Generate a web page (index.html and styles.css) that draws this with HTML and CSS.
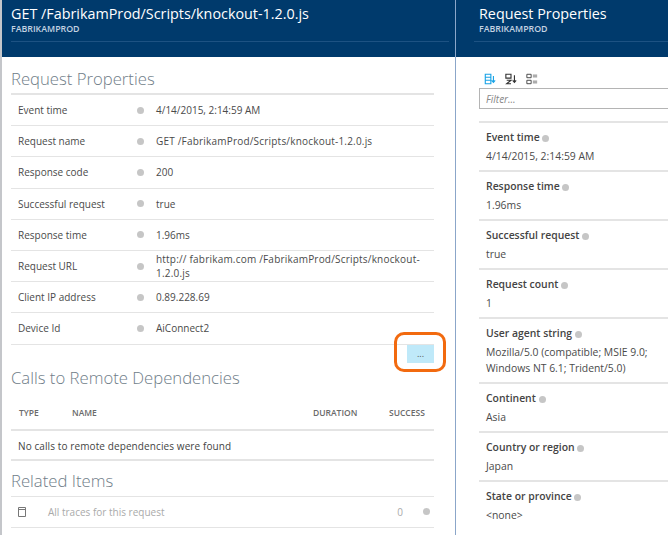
FILE: index.html
```html
<!DOCTYPE html>
<html lang="en">
<head>
  <meta charset="UTF-8">
  <title>Request Properties</title>
  <link rel="stylesheet" href="styles.css">
</head>
<body>
  <div class="blades">
    <section class="blade blade-main">
      <header class="blade-head">
        <h1>GET /FabrikamProd/Scripts/knockout-1.2.0.js</h1>
        <div class="sub">FABRIKAMPROD</div>
        <div class="head-rule"></div>
      </header>
      <div class="blade-body">
        <h2>Request Properties</h2>
        <div class="props">
          <div class="prop"><span class="key">Event time</span><span class="dot"></span><span class="val">4/14/2015, 2:14:59 AM</span></div>
          <div class="prop"><span class="key">Request name</span><span class="dot"></span><span class="val long">GET /FabrikamProd/Scripts/knockout-1.2.0.js</span></div>
          <div class="prop"><span class="key">Response code</span><span class="dot"></span><span class="val">200</span></div>
          <div class="prop"><span class="key">Successful request</span><span class="dot"></span><span class="val">true</span></div>
          <div class="prop"><span class="key">Response time</span><span class="dot"></span><span class="val">1.96ms</span></div>
          <div class="prop"><span class="key">Request URL</span><span class="dot"></span><span class="val long">http:// fabrikam.com /FabrikamProd/Scripts/knockout-1.2.0.js</span></div>
          <div class="prop"><span class="key">Client IP address</span><span class="dot"></span><span class="val">0.89.228.69</span></div>
          <div class="prop"><span class="key">Device Id</span><span class="dot"></span><span class="val">AiConnect2</span></div>
        </div>
        <div class="more-row">
          <button class="more">...</button>
          <span class="callout"></span>
        </div>
        <h2 class="h-calls">Calls to Remote Dependencies</h2>
        <div class="dep-head">
          <span class="c-type">TYPE</span>
          <span class="c-name">NAME</span>
          <span class="c-dur">DURATION</span>
          <span class="c-ok">SUCCESS</span>
        </div>
        <div class="dep-empty">No calls to remote dependencies were found</div>
        <h2 class="h-related">Related Items</h2>
        <div class="related">
          <svg class="doc" width="8" height="10" viewBox="0 0 8 10"><path d="M.5.500h7v9h-7zM.5 2.500h7" fill="none" stroke="#777" stroke-width="1"/></svg>
          <span class="rel-name">All traces for this request</span>
          <span class="rel-count">0</span>
          <span class="dot"></span>
        </div>
      </div>
    </section>
    <section class="blade blade-side">
      <header class="blade-head">
        <h1>Request Properties</h1>
        <div class="sub">FABRIKAMPROD</div>
        <div class="head-rule"></div>
      </header>
      <div class="blade-body">
        <div class="tools">
          <svg width="12" height="12" viewBox="0 0 14 13"><path d="M1.500 1h6.500v11H1.500zM1.500 4.500h6.500M1.500 8h6.500M11 3v7M9 8l2 2.500L13 8" fill="none" stroke="#19a3e6" stroke-width="1.300"/></svg>
          <svg width="12" height="12" viewBox="0 0 14 13"><path d="M1 1h6v4.500H1zM2 8h5L2 12h5M11 2v8M9 8l2 2.500L13 8" fill="none" stroke="#333" stroke-width="1.300"/></svg>
          <svg width="12" height="12" viewBox="0 0 14 13"><path d="M1 1h5v4H1zM1 8h5v4H1z" fill="none" stroke="#444" stroke-width="1.100"/><path d="M8 2h5M8 4h5M8 9h5M8 11h5" stroke="#777" stroke-width="1.100"/></svg>
        </div>
        <input class="filter" type="text" placeholder="Filter...">
        <div class="item"><div class="name">Event time <span class="dot"></span></div><div class="text">4/14/2015, 2:14:59 AM</div></div>
        <div class="item"><div class="name">Response time <span class="dot"></span></div><div class="text">1.96ms</div></div>
        <div class="item"><div class="name">Successful request <span class="dot"></span></div><div class="text">true</div></div>
        <div class="item"><div class="name">Request count <span class="dot"></span></div><div class="text">1</div></div>
        <div class="item"><div class="name">User agent string <span class="dot"></span></div><div class="text">Mozilla/5.0 (compatible; MSIE 9.0; Windows NT 6.1; Trident/5.0)</div></div>
        <div class="item"><div class="name">Continent <span class="dot"></span></div><div class="text">Asia</div></div>
        <div class="item"><div class="name">Country or region <span class="dot"></span></div><div class="text">Japan</div></div>
        <div class="item"><div class="name">State or province <span class="dot"></span></div><div class="text">&lt;none&gt;</div></div>
      </div>
    </section>
  </div>
</body>
</html>
```

FILE: styles.css
```css
html, body {
  margin: 0;
  height: 100%;
  overflow: hidden;
}

body {
  font-family: "Open Sans", "Noto Sans", sans-serif;
  font-size: 10px;
  color: #444;
  background-color: #fff;
}

.blades {
  display: flex;
  height: 535px;
}

.blade {
  box-sizing: border-box;
  height: 535px;
  overflow: hidden;
}

.blade-main {
  width: 456px;
  flex: none;
  border-left: 2px solid #c4c6ca;
  border-right: 1px solid #8ba6c9;
}

.blade-side {
  flex: 1;
  min-width: 0;
}

.blade-head {
  height: 57px;
  box-sizing: border-box;
  background-color: #003a6c;
  color: #fff;
  padding: 4px 0 0 9px;
}

.blade-main .blade-head {
  margin-left: -2px;
  padding-left: 11px;
  margin-right: -1px;
  border-right: 1px solid #00305a;
}

.blade-side .blade-head {
  padding-left: 23px;
}

.blade-head h1 {
  margin: 0;
  font-size: 14.350px;
  line-height: 19px;
  font-weight: 400;
  white-space: nowrap;
}

.sub {
  font-size: 8.800px;
  line-height: 11px;
  margin-top: 1px;
  font-weight: 600;
  color: #c4d3e2;
}

.head-rule {
  height: 1px;
  margin-top: 6px;
  background-color: #1d5283;
  margin-right: 6px;
}

.blade-side .head-rule {
  margin-right: 0;
  margin-left: -5px;
}

.blade-main .blade-body {
  padding: 11px 21px 0 9px;
}

h2 {
  margin: 0;
  font-size: 16.700px;
  line-height: 22px;
  font-weight: 300;
  color: #6f7d88;
}

.props {
  margin-top: 3px;
  border-top: 2px solid #e4e4e4;
}

.prop {
  display: flex;
  align-items: center;
  box-sizing: border-box;
  height: 31.200px;
  border-bottom: 1.500px solid #e4e4e4;
  padding-left: 7px;
}

.key {
  width: 119px;
  flex: none;
  color: #4a4a4a;
}

.dot {
  display: inline-block;
  width: 7px;
  height: 7px;
  border-radius: 50%;
  background-color: #c6c6c6;
  flex: none;
}

.val {
  margin-left: 12px;
  line-height: 14px;
  color: #4a4a4a;
}

.long {
  letter-spacing: 0.200px;
}

.more-row {
  display: flex;
  justify-content: flex-end;
  position: relative;
  height: 18px;
}

.more {
  width: 27px;
  height: 18px;
  border: 0;
  padding: 0;
  background-color: #bfe9f9;
  font-family: inherit;
  font-size: 9px;
  color: #555;
}

.callout {
  position: absolute;
  right: -12px;
  top: -13px;
  width: 46px;
  height: 34px;
  border: 3px solid #f26a0f;
  border-radius: 10px;
}

.h-calls {
  margin-top: 4px;
}

.dep-head {
  display: flex;
  align-items: center;
  height: 32px;
  margin-top: 8px;
  border-bottom: 2px solid #e4e4e4;
  font-size: 8.500px;
  font-weight: 600;
  color: #6a6a6a;
}

.c-type {
  width: 61px;
  padding-left: 8px;
  box-sizing: border-box;
}

.c-name {
  flex: 1;
}

.c-dur {
  width: 76px;
}

.c-ok {
  width: 45px;
}

.dep-empty {
  height: 30px;
  box-sizing: border-box;
  line-height: 31px;
  padding-left: 7px;
  letter-spacing: 0.100px;
  border-bottom: 2px solid #e4e4e4;
}

.h-related {
  margin-top: 9px;
}

.related {
  display: flex;
  align-items: center;
  height: 32px;
  box-sizing: border-box;
  margin-top: 4px;
  border-top: 1.500px solid #e4e4e4;
  border-bottom: 1.500px solid #e4e4e4;
  color: #aaa;
  padding: 0 4px 0 7px;
}

.doc {
  flex: none;
}

.rel-name {
  flex: 1;
  margin-left: 22px;
}

.rel-count {
  margin-right: 20px;
}

.blade-side .blade-body {
  padding: 16px 0 0 23px;
}

.tools {
  display: flex;
  gap: 9px;
  height: 13px;
  padding-left: 5px;
}

.filter {
  display: block;
  box-sizing: border-box;
  width: 100%;
  height: 21px;
  margin-top: 2px;
  border: 1px solid #b4b4b4;
  border-right: 0;
  padding: 0 6px;
  font-family: inherit;
  font-size: 10px;
  font-style: italic;
  outline: none;
}

.filter::placeholder {
  color: #888;
}

.item {
  border-top: 2px solid #e4e4e4;
  padding: 6px 12px 6px 7px;
  font-size: 10.400px;
  line-height: 16px;
  color: #4a4a4a;
}

.filter + .item {
  margin-top: 12px;
}

.name {
  font-weight: 600;
  height: 19px;
  color: #444;
}

.name .dot {
  vertical-align: -0.500px;
}
```
